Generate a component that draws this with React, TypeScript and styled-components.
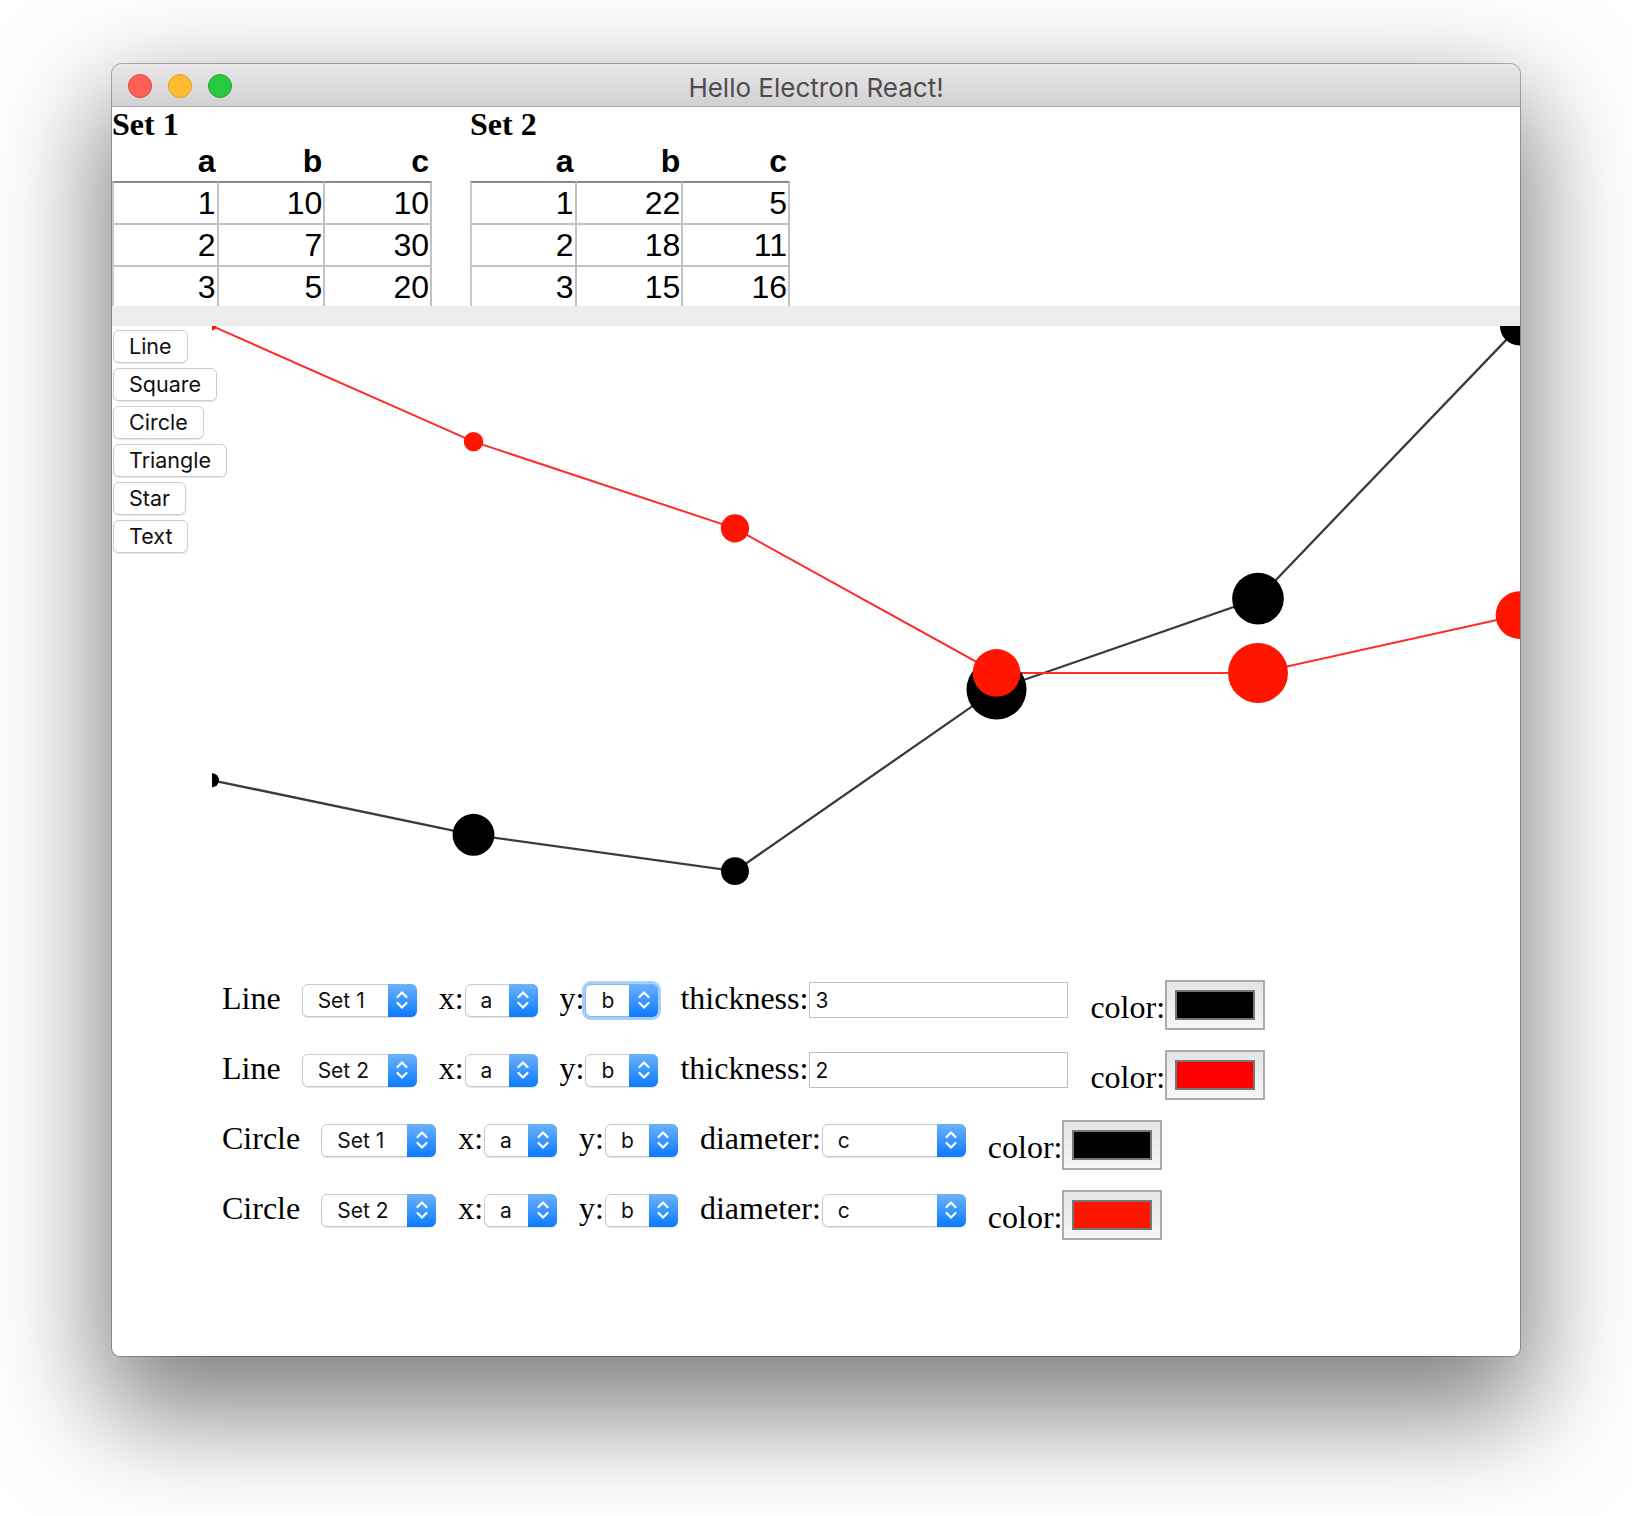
import React from 'react';
import styled, { createGlobalStyle } from 'styled-components';

type Row = { a: number; b: number; c: number };

const set1: Row[] = [
  { a: 1, b: 10, c: 10 },
  { a: 2, b: 7, c: 30 },
  { a: 3, b: 5, c: 20 },
  { a: 4, b: 15, c: 43 },
  { a: 5, b: 20, c: 37 },
  { a: 6, b: 35, c: 28 },
];

const set2: Row[] = [
  { a: 1, b: 22, c: 5 },
  { a: 2, b: 18, c: 11 },
  { a: 3, b: 15, c: 16 },
  { a: 4, b: 10, c: 27 },
  { a: 5, b: 10, c: 34 },
  { a: 6, b: 12, c: 27 },
];

// the table pane only has room for the first rows
const VISIBLE_ROWS = 3;

const CHART_W = 1308;
const CHART_H = 636;
const MAX_R = 30;

const toPoints = (rows: Row[]) => {
  const minA = Math.min(...rows.map((r) => r.a));
  const maxA = Math.max(...rows.map((r) => r.a));
  const maxB = Math.max(...rows.map((r) => r.b));
  const maxC = Math.max(...rows.map((r) => r.c));
  return rows.map((r) => ({
    x: ((r.a - minA) / (maxA - minA)) * (CHART_W - 0.5),
    y: CHART_H * (1 - r.b / maxB),
    r: (MAX_R * r.c) / maxC,
  }));
};

const GlobalStyle = createGlobalStyle`
  html, body {
    margin: 0;
    padding: 0;
    background: #fff;
  }
  body {
    width: 1632px;
    height: 1516px;
    overflow: hidden;
  }
`;

const Page = styled.div`
  box-sizing: border-box;
  height: 1516px;
  padding: 64px 0 0 112px;
`;

const Window = styled.div`
  width: 1408px;
  height: 1292px;
  border-radius: 10px 10px 8px 8px;
  overflow: hidden;
  background: #fff;
  display: flex;
  flex-direction: column;
  box-shadow: 0 0 0 1px rgba(0, 0, 0, 0.28), 0 46px 110px 12px rgba(0, 0, 0, 0.5);
`;

const TitleBar = styled.div`
  box-sizing: border-box;
  height: 43px;
  flex: none;
  display: grid;
  grid-template-columns: 1fr auto 1fr;
  align-items: center;
  background: linear-gradient(#e9e7e9, #d2d0d2);
  border-bottom: 1px solid #afafaf;
`;

const Lights = styled.div`
  display: flex;
  gap: 16px;
  padding-left: 16px;
  padding-top: 1px;
`;

const Light = styled.span<{ $fill: string; $edge: string }>`
  width: 24px;
  height: 24px;
  box-sizing: border-box;
  border-radius: 50%;
  background: ${(p) => p.$fill};
  border: 1px solid ${(p) => p.$edge};
`;

const Title = styled.div`
  padding-top: 5px;
  font-family: Inter, 'Noto Sans', sans-serif;
  font-size: 26px;
  color: #4d4d4d;
`;

const Content = styled.div`
  flex: 1;
  display: flex;
  flex-direction: column;
`;

const TablesArea = styled.div`
  height: 199px;
  overflow: hidden;
  display: flex;
  align-items: flex-start;
  gap: 38px;
`;

const DataSet = styled.div`
  display: flex;
  flex-direction: column;
`;

const SetHeading = styled.h3`
  margin: 0;
  font-family: 'Liberation Serif', serif;
  font-weight: bold;
  font-size: 32px;
  line-height: 34px;
  color: #000;
`;

const Table = styled.table`
  width: 320px;
  table-layout: fixed;
  border-spacing: 0;
  font-family: 'Liberation Sans', Arial, sans-serif;
  font-size: 32px;
  color: #000;
`;

const Th = styled.th`
  padding: 2px 1px 2px 3px;
  line-height: 36px;
  text-align: right;
  font-weight: bold;
  border-right: 2px solid transparent;
  &:first-child {
    border-left: 2px solid transparent;
  }
`;

const Td = styled.td`
  padding: 2px 1px 2px 3px;
  line-height: 36px;
  text-align: right;
  border-right: 2px solid #c2c2c2;
  border-bottom: 2px solid #c2c2c2;
  &:first-child {
    border-left: 2px solid #cacaca;
  }
  tr:first-child > & {
    border-top: 2px solid #8a8a8a;
  }
`;

const Band = styled.div`
  height: 20px;
  flex: none;
  background: #ededed;
`;

const ChartArea = styled.div`
  position: relative;
  height: ${CHART_H}px;
  flex: none;
`;

const Toolbar = styled.div`
  position: absolute;
  left: 1px;
  top: 4px;
  z-index: 1;
  display: flex;
  flex-direction: column;
  align-items: flex-start;
  gap: 5px;
`;

const ToolButton = styled.button`
  box-sizing: border-box;
  height: 33px;
  margin: 0;
  padding: 0 15px;
  border: 1px solid #cdcdcd;
  border-radius: 6px;
  background: #fff;
  box-shadow: 0 1px 1px rgba(0, 0, 0, 0.1);
  font-family: Inter, 'Noto Sans', sans-serif;
  font-size: 21.5px;
  line-height: 31px;
  color: #111;
`;

const ChartSvg = styled.svg`
  display: block;
  margin-left: 100px;
  overflow: hidden;
`;

const Form = styled.div`
  padding: 3px 0 0 110px;
`;

const FormRow = styled.div`
  display: flex;
  align-items: center;
  height: 70px;
`;

const SerifText = styled.span`
  font-family: 'Liberation Serif', serif;
  font-size: 32px;
  line-height: 36px;
  color: #000;
  padding-bottom: 4px;
`;

const Kind = styled(SerifText)`
  margin-right: 20px;
`;

const Field = styled.div`
  display: flex;
  align-items: center;
  margin-right: 22px;
`;

const ColorField = styled.div`
  display: flex;
  align-items: flex-end;
  margin-top: 10px;
`;

const ColorLabel = styled(SerifText)`
  padding-bottom: 0;
  margin-bottom: 5px;
`;

const SelectBox = styled.div<{ $w: number; $focused?: boolean }>`
  box-sizing: border-box;
  width: ${(p) => p.$w}px;
  height: 33px;
  margin-left: 1px;
  display: flex;
  border: 1px solid ${(p) => (p.$focused ? '#86b9f3' : '#cacaca')};
  border-radius: 6px;
  background: #fff;
  box-shadow: ${(p) =>
    p.$focused
      ? '0 0 0 3px rgba(100, 165, 245, 0.55)'
      : '0 1px 1px rgba(0, 0, 0, 0.12)'};
  font-family: Inter, 'Noto Sans', sans-serif;
  font-size: 21px;
  color: #111;
`;

const SelectText = styled.span`
  flex: 1;
  padding-left: 15px;
  line-height: 31px;
`;

const Stepper = styled.span`
  width: 29px;
  margin: -1px -1px -1px 0;
  border-radius: 0 6px 6px 0;
  background: linear-gradient(#6cb2fb, #0a7aff);
  display: flex;
  align-items: center;
  justify-content: center;
`;

const TextInput = styled.input`
  box-sizing: border-box;
  width: 259px;
  height: 36px;
  margin: 0 0 0 1px;
  padding: 0 5px;
  border: 1px solid #bfbfbf;
  outline: none;
  background: #fff;
  font-family: Inter, 'Noto Sans', sans-serif;
  font-size: 21px;
  color: #111;
`;

const ColorWell = styled.div`
  box-sizing: border-box;
  width: 100px;
  height: 50px;
  border: 2px solid #ababab;
  background: linear-gradient(#e4e4e4, #f6f6f6);
  display: flex;
  align-items: center;
  justify-content: center;
`;

const Swatch = styled.div<{ $color: string }>`
  box-sizing: border-box;
  width: 80px;
  height: 30px;
  border: 2px solid #777;
  background: ${(p) => p.$color};
`;

const Chevrons = () => (
  <svg width="14" height="20" viewBox="0 0 14 20" fill="none" stroke="#fff" strokeWidth="2.2" strokeLinecap="round" strokeLinejoin="round">
    <path d="M2.5 7 L7 2.5 L11.5 7" />
    <path d="M2.5 13 L7 17.5 L11.5 13" />
  </svg>
);

const Select: React.FC<{ value: string; width: number; focused?: boolean }> = ({ value, width, focused }) => (
  <SelectBox $w={width} $focused={focused}>
    <SelectText>{value}</SelectText>
    <Stepper>
      <Chevrons />
    </Stepper>
  </SelectBox>
);

const ColorPicker: React.FC<{ color: string }> = ({ color }) => (
  <ColorField>
    <ColorLabel>color:</ColorLabel>
    <ColorWell>
      <Swatch $color={color} />
    </ColorWell>
  </ColorField>
);

const DataTable: React.FC<{ name: string; rows: Row[] }> = ({ name, rows }) => (
  <DataSet>
    <SetHeading>{name}</SetHeading>
    <Table>
      <thead>
        <tr>
          <Th>a</Th>
          <Th>b</Th>
          <Th>c</Th>
        </tr>
      </thead>
      <tbody>
        {rows.slice(0, VISIBLE_ROWS).map((r) => (
          <tr key={r.a}>
            <Td>{r.a}</Td>
            <Td>{r.b}</Td>
            <Td>{r.c}</Td>
          </tr>
        ))}
      </tbody>
    </Table>
  </DataSet>
);

const tools = ['Line', 'Square', 'Circle', 'Triangle', 'Star', 'Text'];

const App: React.FC = () => {
  const p1 = toPoints(set1);
  const p2 = toPoints(set2);
  const poly = (pts: { x: number; y: number }[]) => pts.map((p) => `${p.x},${p.y}`).join(' ');

  return (
    <>
      <GlobalStyle />
      <Page>
        <Window>
          <TitleBar>
            <Lights>
              <Light $fill="#fe5f57" $edge="#e0443e" />
              <Light $fill="#febc2e" $edge="#dea123" />
              <Light $fill="#28c840" $edge="#1aab29" />
            </Lights>
            <Title>Hello Electron React!</Title>
            <div />
          </TitleBar>
          <Content>
            <TablesArea>
              <DataTable name="Set 1" rows={set1} />
              <DataTable name="Set 2" rows={set2} />
            </TablesArea>
            <Band />
            <ChartArea>
              <Toolbar>
                {tools.map((t) => (
                  <ToolButton key={t}>{t}</ToolButton>
                ))}
              </Toolbar>
              <ChartSvg width={CHART_W} height={CHART_H}>
                <polyline points={poly(p1)} fill="none" stroke="#3a3a3a" strokeWidth={2.3} />
                <polyline points={poly(p2)} fill="none" stroke="#ff2a2a" strokeWidth={2} />
                {p1.map((p, i) => (
                  <circle key={`b${i}`} cx={p.x} cy={p.y} r={p.r} fill="#000" />
                ))}
                {p2.map((p, i) => (
                  <circle key={`r${i}`} cx={p.x} cy={p.y} r={p.r} fill="#ff1500" />
                ))}
              </ChartSvg>
            </ChartArea>
            <Form>
              <FormRow>
                <Kind>Line</Kind>
                <Field>
                  <Select value="Set 1" width={115} />
                </Field>
                <Field>
                  <SerifText>x:</SerifText>
                  <Select value="a" width={73} />
                </Field>
                <Field>
                  <SerifText>y:</SerifText>
                  <Select value="b" width={73} focused />
                </Field>
                <Field>
                  <SerifText>thickness:</SerifText>
                  <TextInput defaultValue="3" />
                </Field>
                <ColorPicker color="#000" />
              </FormRow>
              <FormRow>
                <Kind>Line</Kind>
                <Field>
                  <Select value="Set 2" width={115} />
                </Field>
                <Field>
                  <SerifText>x:</SerifText>
                  <Select value="a" width={73} />
                </Field>
                <Field>
                  <SerifText>y:</SerifText>
                  <Select value="b" width={73} />
                </Field>
                <Field>
                  <SerifText>thickness:</SerifText>
                  <TextInput defaultValue="2" />
                </Field>
                <ColorPicker color="#ff0000" />
              </FormRow>
              <FormRow>
                <Kind>Circle</Kind>
                <Field>
                  <Select value="Set 1" width={115} />
                </Field>
                <Field>
                  <SerifText>x:</SerifText>
                  <Select value="a" width={73} />
                </Field>
                <Field>
                  <SerifText>y:</SerifText>
                  <Select value="b" width={73} />
                </Field>
                <Field>
                  <SerifText>diameter:</SerifText>
                  <Select value="c" width={144} />
                </Field>
                <ColorPicker color="#000" />
              </FormRow>
              <FormRow>
                <Kind>Circle</Kind>
                <Field>
                  <Select value="Set 2" width={115} />
                </Field>
                <Field>
                  <SerifText>x:</SerifText>
                  <Select value="a" width={73} />
                </Field>
                <Field>
                  <SerifText>y:</SerifText>
                  <Select value="b" width={73} />
                </Field>
                <Field>
                  <SerifText>diameter:</SerifText>
                  <Select value="c" width={144} />
                </Field>
                <ColorPicker color="#ff1500" />
              </FormRow>
            </Form>
          </Content>
        </Window>
      </Page>
    </>
  );
};

export default App;
